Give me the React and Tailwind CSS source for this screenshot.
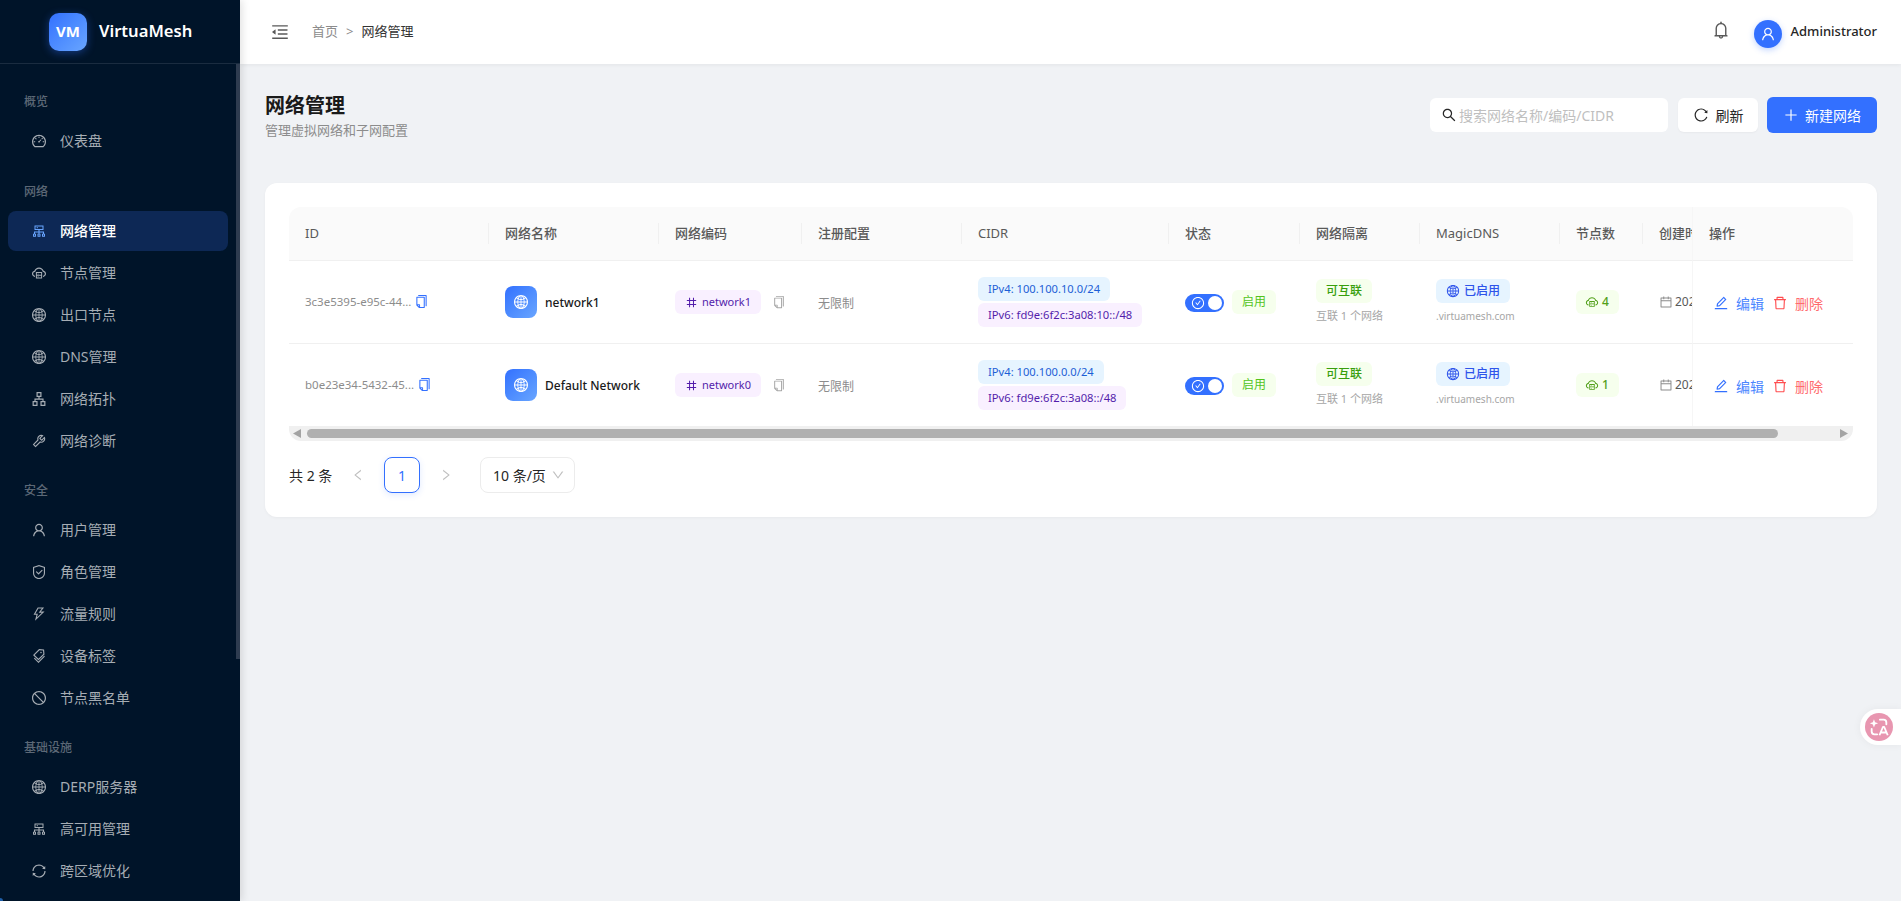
import React from "react";
import {
  AiOutlineDashboard, AiOutlineCluster, AiOutlineCloudServer, AiOutlineGlobal, AiOutlineApartment,
  AiOutlineTool, AiOutlineUser, AiOutlineSafety, AiOutlineThunderbolt, AiOutlineTags, AiOutlineStop,
  AiOutlineSync, AiOutlineMenuFold, AiOutlineBell, AiOutlineSearch, AiOutlineReload, AiOutlinePlus,
  AiOutlineCopy, AiOutlineNumber, AiOutlineCheckCircle, AiOutlineEdit, AiOutlineDelete, AiOutlineCalendar,
  AiOutlineLeft, AiOutlineRight, AiOutlineDown,
} from "react-icons/ai";

const sections = [
  { label: "概览", extra: "mb-[20px]", items: [["仪表盘", AiOutlineDashboard]] },
  { label: "网络", items: [
    ["网络管理", AiOutlineCluster, true], ["节点管理", AiOutlineCloudServer], ["出口节点", AiOutlineGlobal],
    ["DNS管理", AiOutlineGlobal], ["网络拓扑", AiOutlineApartment], ["网络诊断", AiOutlineTool],
  ] },
  { label: "安全", items: [
    ["用户管理", AiOutlineUser], ["角色管理", AiOutlineSafety], ["流量规则", AiOutlineThunderbolt],
    ["设备标签", AiOutlineTags], ["节点黑名单", AiOutlineStop],
  ] },
  { label: "基础设施", items: [
    ["DERP服务器", AiOutlineGlobal], ["高可用管理", AiOutlineCluster], ["跨区域优化", AiOutlineSync],
  ] },
];

const rows = [
  { id: "3c3e5395-e95c-44...", name: "network1", code: "network1", v4: "IPv4: 100.100.10.0/24", v6: "IPv6: fd9e:6f2c:3a08:10::/48", nodes: 4 },
  { id: "b0e23e34-5432-45...", name: "Default Network", code: "network0", v4: "IPv4: 100.100.0.0/24", v6: "IPv6: fd9e:6f2c:3a08::/48", nodes: 1 },
];

const heads = [
  ["ID", true], ["网络名称"], ["网络编码"], ["注册配置"], ["CIDR", true], ["状态"], ["网络隔离"], ["MagicDNS", true], ["节点数"], ["创建时间"],
];
const widths = ["w-[200px]", "w-[170px]", "w-[143px]", "w-[160px]", "w-[207px]", "w-[131px]", "w-[120px]", "w-[140px]", "w-[83px]", "w-[111px]", "w-[161px]"];

function Sidebar() {
  return (
    <aside className="relative w-[240px] shrink-0 h-full bg-[#001429] flex flex-col z-20 shadow-[2px_0_8px_rgba(0,0,0,0.12)]">
      <div className="h-16 shrink-0 flex items-center pl-[49px] gap-3 border-b border-[#1a2c40]">
        <div className="w-[38px] h-[38px] rounded-[10px] bg-gradient-to-br from-[#3370ff] to-[#69a5ff] flex items-center justify-center text-white text-[15px] font-bold shadow-[0_2px_8px_rgba(51,112,255,0.4)]">VM</div>
        <span className="text-white text-[16.6px] font-semibold">VirtuaMesh</span>
      </div>
      <div className="relative flex-1 overflow-hidden pt-[27px]">
        <div className="absolute right-0 top-0 w-1 h-[595px] bg-[#2e3c50]" />
        {sections.map((s, i) => (
          <div key={s.label} className={`${i ? "mt-[19px]" : ""} ${s.extra || ""}`}>
            <div className="h-5 leading-[18px] pt-[2px] pl-6 mb-[10px] text-[12px] font-medium text-[#5c6876]">{s.label}</div>
            <div className="flex flex-col gap-[2px]">
              {s.items.map(([t, Icon, active]) => (
                <div key={t} className={`h-10 mx-2 w-[220px] shrink-0 rounded-lg flex items-center pl-[23px] ${active ? "bg-[#0d2855] text-white font-medium" : "text-[#a6adb4]"}`}>
                  <Icon className={`w-4 h-4 shrink-0 ${active ? "text-[#69a5ff]" : ""}`} />
                  <span className="ml-[13px] mb-[2px] text-[14px]">{t}</span>
                </div>
              ))}
            </div>
          </div>
        ))}
      </div>
      <div className="absolute left-0 bottom-0 w-[3px] h-[3px] rounded-tr-full bg-[#1f5fa8]" />
    </aside>
  );
}

function Header() {
  return (
    <header className="h-16 shrink-0 bg-white flex items-center pl-[30px] pr-6 shadow-[0_1px_4px_rgba(0,0,0,0.06)] z-10">
      <AiOutlineMenuFold className="w-5 h-5 text-[#595959]" />
      <div className="ml-[22px] flex items-center text-[13px] text-[#8c8c8c]">
        <span>首页</span>
        <span className="mx-2">&gt;</span>
        <span className="text-[#333333]">网络管理</span>
      </div>
      <div className="ml-auto flex items-center">
        <AiOutlineBell className="w-5 h-5 mb-1 text-[#595959]" />
        <div className="ml-[23px] mt-1 w-7 h-7 rounded-full bg-[#3370ff] flex items-center justify-center text-white shadow-[0_2px_6px_rgba(51,112,255,0.3)]">
          <AiOutlineUser className="w-4 h-4" />
        </div>
        <span className="ml-[9px] text-[13px] font-medium text-[#262626]">Administrator</span>
      </div>
    </header>
  );
}

function Th({ children, last, latin }) {
  return (
    <th className={`relative h-[54px] px-4 text-left text-[13px] ${latin ? "font-normal" : "font-medium"} text-[#595959] bg-[#fafafa] border-b border-[#f0f0f0] whitespace-nowrap overflow-hidden`}>
      {children}
      {!last && <span className="absolute right-0 top-[16px] w-px h-[21px] bg-[#f0f0f0]" />}
    </th>
  );
}

function Tag({ className, children }) {
  return <span className={`inline-flex items-center h-6 shrink-0 rounded-md whitespace-nowrap ${className}`}>{children}</span>;
}

function Table() {
  return (
    <div className="overflow-hidden rounded-t-xl">
      <table className="w-[1626px] table-fixed border-separate border-spacing-0">
        <colgroup>{widths.map((w, i) => <col key={i} className={w} />)}</colgroup>
        <thead>
          <tr>
            {heads.map(([h, latin], i) => <Th key={h} latin={latin} last={i === 9}>{h}</Th>)}
            <th className="sticky right-0 h-[54px] px-4 text-left text-[13px] font-medium text-[#595959] bg-[#fafafa] border-b border-[#f0f0f0] border-l border-l-[#f6f6f6]">操作</th>
          </tr>
        </thead>
        <tbody>
          {rows.map((r, ri) => {
            const rowCls = ri === 0 ? "h-[83px] border-b border-[#f0f0f0]" : "h-[82px]";
            const Td = ({ children }) => <td className={`${rowCls} px-4 whitespace-nowrap overflow-hidden align-middle`}>{children}</td>;
            return (
              <tr key={r.id}>
                <Td>
                  <div className="flex items-center text-[11.5px] text-[#8c8c8c]">
                    <span>{r.id}</span>
                    <AiOutlineCopy className="ml-[3px] mb-[2px] w-[15px] h-[15px] shrink-0 text-[#3370ff]" />
                  </div>
                </Td>
                <Td>
                  <div className="flex items-center">
                    <div className="w-8 h-8 shrink-0 rounded-lg bg-gradient-to-br from-[#3370ff] to-[#69a5ff] flex items-center justify-center text-white">
                      <AiOutlineGlobal className="w-4 h-4" />
                    </div>
                    <span className="ml-2 mt-[2px] text-[12px] font-medium text-[#1a1a1a]">{r.name}</span>
                  </div>
                </Td>
                <Td>
                  <div className="flex items-center">
                    <Tag className="bg-[#f9f0ff] text-[#531dab] text-[11px] px-[10px]">
                      <AiOutlineNumber className="w-[13px] h-[13px] mr-1 shrink-0" />{r.code}
                    </Tag>
                    <AiOutlineCopy className="ml-[11px] w-[14px] h-[14px] shrink-0 text-[#a6a6a6]" />
                  </div>
                </Td>
                <Td><span className="text-[12px] text-[#8c8c8c]">无限制</span></Td>
                <Td>
                  <div className="flex flex-col items-start gap-[2px]">
                    <Tag className="bg-[#e6f4ff] text-[#1d5fd6] text-[11.2px] px-[10px]">{r.v4}</Tag>
                    <Tag className="bg-[#f9f0ff] text-[#531dab] text-[11.2px] px-[10px]">{r.v6}</Tag>
                  </div>
                </Td>
                <Td>
                  <div className="flex items-center">
                    <div className="w-[39px] h-[18px] mt-[2px] shrink-0 rounded-full bg-[#3370ff] flex items-center justify-between pl-[6px] pr-[2px]">
                      <AiOutlineCheckCircle className="w-[14px] h-[14px] text-white" />
                      <span className="w-[14px] h-[14px] rounded-full bg-white" />
                    </div>
                    <Tag className="ml-2 bg-[#f6ffed] text-[#52c41a] text-[12px] px-[10px]">启用</Tag>
                  </div>
                </Td>
                <Td>
                  <div className="flex flex-col items-start">
                    <Tag className="bg-[#f6ffed] text-[#389e0d] text-[12px] font-medium px-[10px]">可互联</Tag>
                    <span className="mt-[4px] text-[11px] leading-[18px] text-[#a6a6a6]">互联 1 个网络</span>
                  </div>
                </Td>
                <Td>
                  <div className="flex flex-col items-start">
                    <Tag className="bg-[#e6f4ff] text-[#2f54eb] text-[12px] font-medium px-[10px]">
                      <AiOutlineGlobal className="w-[14px] h-[14px] mr-1 shrink-0" />已启用
                    </Tag>
                    <span className="mt-[4px] text-[10px] leading-[18px] text-[#a6a6a6]">.virtuamesh.com</span>
                  </div>
                </Td>
                <Td>
                  <Tag className="bg-[#f6ffed] text-[#52a01a] text-[12px] font-medium pl-[9px] pr-[10px]">
                    <AiOutlineCloudServer className="w-[14px] h-[14px] mr-[3px] shrink-0" />{r.nodes}
                  </Tag>
                </Td>
                <Td>
                  <div className="flex items-center text-[12px] text-[#595959]">
                    <AiOutlineCalendar className="w-[14px] h-[14px] mr-[2px] text-[#8c8c8c] shrink-0" />
                    <span>2025-12-01</span>
                  </div>
                </Td>
                <td className={`sticky right-0 ${rowCls} pl-[20px] bg-white border-l border-l-[#f6f6f6] whitespace-nowrap`}>
                  <div className="flex items-center mt-[2px] text-[14px]">
                    <AiOutlineEdit className="w-[16px] h-[16px] text-[#3370ff]" />
                    <span className="ml-[7px] text-[#4c86ff]">编辑</span>
                    <AiOutlineDelete className="ml-[8px] w-[16px] h-[16px] text-[#ff4d4f]" />
                    <span className="ml-[7px] text-[#ff6b6e]">删除</span>
                  </div>
                </td>
              </tr>
            );
          })}
        </tbody>
      </table>
    </div>
  );
}

function Scrollbar() {
  return (
    <div className="h-[15px] bg-[#f0f0f0] rounded-b-xl flex items-center">
      <svg viewBox="0 0 8 9" className="ml-1 w-2 h-[9px] shrink-0" fill="#a3a3a3"><path d="M8 0v9L0 4.5z" /></svg>
      <div className="ml-[6px] w-[1471px] h-[9px] rounded-full bg-[#b0b0b0]" />
      <svg viewBox="0 0 8 9" className="ml-auto mr-[5px] w-2 h-[9px] shrink-0" fill="#a3a3a3"><path d="M0 0v9l8-4.5z" /></svg>
    </div>
  );
}

function Pagination() {
  return (
    <div className="mt-4 flex items-center text-[14px] text-[#262626]">
      <span className="w-11 whitespace-nowrap">共 2 条</span>
      <AiOutlineLeft className="ml-[18px] w-[14px] h-[14px] text-[#bfbfbf]" />
      <div className="ml-[19px] w-9 h-9 rounded-lg border border-[#3370ff] flex items-center justify-center text-[#3370ff] shadow-[0_2px_6px_rgba(51,112,255,0.15)]">1</div>
      <AiOutlineRight className="ml-[19px] w-[14px] h-[14px] text-[#bfbfbf]" />
      <div className="ml-[27px] w-[95px] h-9 rounded-lg border border-[#ececec] flex items-center pl-3 pr-[9px]">
        <span>10 条/页</span>
        <AiOutlineDown className="ml-auto w-[14px] h-[14px] text-[#bfbfbf]" />
      </div>
    </div>
  );
}

function Translate() {
  return (
    <div className="absolute right-0 top-[709px] w-[41px] h-9 rounded-l-full bg-white flex items-center pl-[5px] shadow-[0_0_8px_rgba(0,0,0,0.05)] z-30">
      <div className="w-7 h-7 rounded-full bg-[#e896b0] flex items-center justify-center">
        <svg viewBox="0 0 24 24" className="w-[22px] h-[22px]" fill="none" stroke="#fff" strokeWidth="2">
          <path d="M6.5 3.5l1.2 3.3 3.3 1.2-3.3 1.2-1.2 3.3-1.2-3.3L2 8l3.3-1.2z" fill="#fff" stroke="none" />
          <path d="M13 4h4a3 3 0 0 1 3 3v2" strokeLinecap="round" />
          <path d="M4 14v3a3 3 0 0 0 3 3h3" strokeLinecap="round" />
          <path d="M12.5 21l3.8-9h1.4l3.8 9M14 18h6" strokeLinejoin="round" />
        </svg>
      </div>
    </div>
  );
}

export default function App() {
  return (
    <div className="relative w-full h-screen flex overflow-hidden bg-[#f0f2f5] font-['Noto_Sans','Noto_Sans_CJK_SC',sans-serif]">
      <Sidebar />
      <main className="flex-1 min-w-0 flex flex-col">
        <Header />
        <div className="px-6 pl-[25px] pt-[33px]">
          <div className="flex items-center justify-between h-[36px]">
            <div>
              <h1 className="text-[20px] leading-[28px] font-bold text-[#1a1a1a]">网络管理</h1>
              <p className="text-[13px] leading-[18px] mt-[1px] text-[#8c8c8c]">管理虚拟网络和子网配置</p>
            </div>
            <div className="flex items-center">
              <div className="w-[238px] h-[34px] bg-white rounded-md flex items-center pl-[11px]">
                <AiOutlineSearch className="w-4 h-4 text-[#262626]" />
                <span className="ml-[2px] text-[14px] text-[#bfbfbf]">搜索网络名称/编码/CIDR</span>
              </div>
              <div className="ml-[10px] w-[80px] h-[34px] bg-white rounded-md flex items-center justify-center text-[14px] text-[#262626] shadow-[0_1px_2px_rgba(0,0,0,0.04)]">
                <AiOutlineReload className="w-4 h-4" />
                <span className="ml-[7px]">刷新</span>
              </div>
              <div className="ml-[9px] w-[110px] h-[36px] bg-[#3370ff] rounded-md flex items-center justify-center text-[14px] text-white">
                <AiOutlinePlus className="w-4 h-4" />
                <span className="ml-[6px]">新建网络</span>
              </div>
            </div>
          </div>
          <section className="mt-[50px] bg-white rounded-xl p-6 shadow-[0_1px_3px_rgba(0,0,0,0.04)]">
            <Table />
            <Scrollbar />
            <Pagination />
          </section>
        </div>
      </main>
      <Translate />
    </div>
  );
}
